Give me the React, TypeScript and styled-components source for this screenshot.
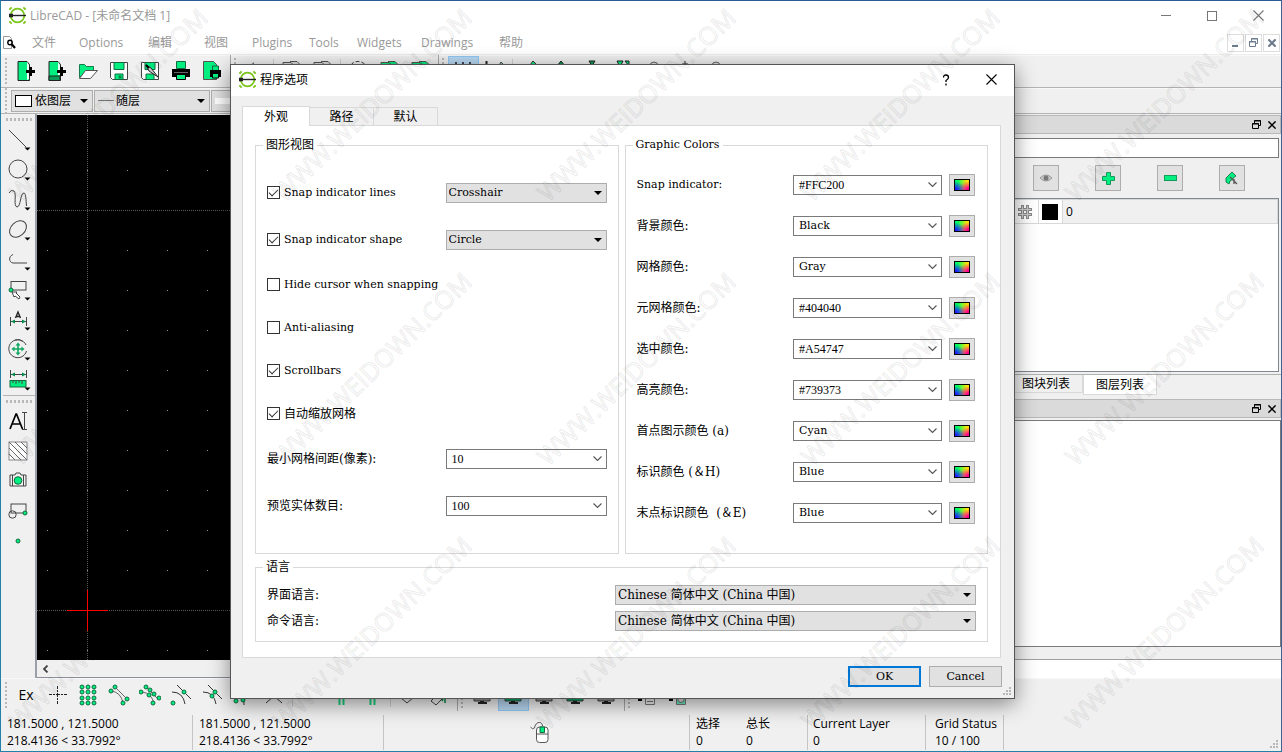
import React from 'react';
import styled, { createGlobalStyle, css } from 'styled-components';

const GREEN = '#00ef80';
const sans = '"Open Sans", "Noto Sans CJK SC", sans-serif';
const song = '"DejaVu Serif", "Noto Sans CJK SC", serif';
const songNumbers = '"Liberation Serif", "Noto Sans CJK SC", serif';

const GlobalStyle = createGlobalStyle`
  *, *::before, *::after { box-sizing: border-box; }
  body { margin: 0; background: #f0f0f0; color: #000; font: 12px/16px ${sans}; }
  button, input, select { font: inherit; color: inherit; margin: 0; }
  svg { display: block; flex: none; }
`;

const Desktop = styled.div`
  position: relative;
  min-height: 100vh;
  display: flex;
  flex-direction: column;
  overflow: hidden;
  border: 1px solid;
  border-color: #2a5b94 #3c6292 #2380a6 #2380a6;
`;

/* ---------- main window ---------- */

const TitleBar = styled.header`
  display: flex;
  align-items: center;
  height: 29px;
  padding: 0 17px 0 8px;
  background: #fff;
  color: #999;
`;

const WindowTitle = styled.span`
  flex: 1;
  margin-left: 4px;
`;

const CaptionButton = styled.button`
  display: grid;
  place-items: center;
  width: 46px;
  height: 28px;
  padding: 0;
  border: 0;
  background: none;
  &:last-child { width: 12px; margin-left: 17px; }
`;

const MenuBar = styled.nav`
  display: flex;
  align-items: center;
  height: 25px;
  padding: 1px 1px 0 1px;
  background: #fff;
  border-bottom: 1px solid #ececec;
  color: #999;
`;

const MenuItems = styled.div`
  flex: 1;
  display: grid;
  grid-template-columns: 47px 69px 56px 48px 57px 48px 64px 78px auto;
  justify-content: start;
  margin-left: 16px;
`;

const MenuItem = styled.button`
  padding: 0;
  border: 0;
  background: none;
  text-align: left;
  white-space: nowrap;
`;

const MdiButtons = styled.div`
  display: flex;
  gap: 1px;
`;

const MdiButton = styled.button`
  display: grid;
  place-items: center;
  width: 17px;
  height: 18px;
  padding: 0;
  border: 1px solid #ddd;
  background: #fff;
`;

const ToolRow = styled.div<{ $height: number; $plain?: boolean }>`
  display: flex;
  align-items: center;
  height: ${p => p.$height}px;
  padding-left: 3px;
  border-bottom: ${p => (p.$plain ? 0 : 1)}px solid #b4b4b4;
  box-shadow: inset 0 1px #f8f8f8;
`;

const Handle = styled.i<{ $across?: boolean }>`
  flex: none;
  ${p => p.$across
    ? css`
        width: 28px;
        height: 3px;
        margin: 4px 0 3px 3px;
        background: repeating-linear-gradient(90deg, #b8b8b8 0 2px, transparent 2px 4px);
      `
    : css`
        width: 2px;
        height: 26px;
        margin: 0 4px 0 1px;
        background: repeating-linear-gradient(#b8b8b8 0 2px, transparent 2px 4px);
      `}
`;

const Rule = styled.i<{ $strong?: boolean }>`
  flex: none;
  width: 1px;
  height: ${p => (p.$strong ? 32 : 24)}px;
  margin: 0 2px;
  background: ${p => (p.$strong ? '#a8a8a8' : '#cfcfcf')};
`;

const ToolButton = styled.button<{ $on?: boolean }>`
  display: grid;
  place-items: center;
  flex: none;
  width: 31px;
  height: 31px;
  padding: 0 1px 0 0;
  border: 1px solid ${p => (p.$on ? '#90c8f6' : 'transparent')};
  background: ${p => (p.$on ? '#b8d8f2' : 'none')};
`;

const ExButton = styled(ToolButton)`
  font-size: 14px;
`;

const Pens = styled.div`
  display: flex;
  gap: 1px;
`;

const Workspace = styled.main`
  flex: 1;
  display: flex;
  min-height: 564px;
`;

const SideBar = styled.aside`
  width: 36px;
  padding-left: 2px;
  border-right: 2px solid #9aa0aa;
`;

const SideGroup = styled.div`
  display: flex;
  flex-direction: column;
  padding-bottom: 1px;
  border-bottom: 1px solid #b4b4b4;
  &:last-child { border-bottom: 0; }
`;

const SideButton = styled.button`
  width: 30px;
  height: 30px;
  padding: 0;
  border: 0;
  background: none;
`;

const DrawingArea = styled.section`
  flex: 1;
  display: flex;
  flex-direction: column;
  min-width: 0;
  padding-top: 1px;
`;

const Plot = styled.svg`
  flex: 1;
  width: 100%;
  min-height: 0;
  background: #000;
`;

const ScrollBar = styled.div`
  display: flex;
  align-items: center;
  height: 18px;
  padding-left: 5px;
  border-bottom: 1px solid #8a8f99;
`;

const Docks = styled.aside`
  width: 320px;
  display: flex;
  flex-direction: column;
  padding-top: 1px;
`;

const DockTitle = styled.div`
  display: flex;
  align-items: center;
  justify-content: flex-end;
  gap: 6px;
  height: 19px;
  padding-right: 3px;
  border: 1px solid #b8b8b8;
  background: #dadada;
`;

const DockButton = styled.button`
  display: grid;
  place-items: center;
  width: 10px;
  height: 16px;
  padding: 0;
  border: 0;
  background: none;
`;

const Search = styled.input`
  height: 20px;
  margin: 4px 2px 0;
  border: 1px solid #7a7a7a;
  background: #fff;
`;

const LayerButtons = styled.div`
  display: flex;
  justify-content: flex-end;
  gap: 36px;
  padding: 7px 36px 7px 0;
`;

const LayerButton = styled.button`
  display: grid;
  place-items: center;
  width: 26px;
  height: 26px;
  padding: 0;
  border: 1px solid #adadad;
  background: #e1e1e1;
`;

const LayerList = styled.div`
  height: 174px;
  margin: 0 2px 2px 3px;
  border: 1px solid #828790;
  background: #fff;
`;

const LayerTable = styled.table`
  width: 100%;
  table-layout: fixed;
  border-collapse: collapse;
  td { height: 24px; padding: 0 3px; border: 1px solid #d8d8d8; background: #fff; }
  td:last-child { background: #f0f0f0; }
`;

const Swatch = styled.i`
  display: block;
  width: 16px;
  height: 16px;
  background: #000;
`;

const DockTabs = styled.div`
  display: flex;
  align-items: flex-start;
  height: 25px;
  padding-left: 48px;
  border-top: 1px solid #b0b0b0;
`;

const DockTab = styled.button<{ $on?: boolean }>`
  width: 74px;
  height: ${p => (p.$on ? 20 : 18)}px;
  padding: 0;
  border: 1px solid #d9d9d9;
  border-top: 0;
  background: ${p => (p.$on ? '#fff' : '#f0f0f0')};
`;

const History = styled.div`
  flex: 1;
  margin-top: 2px;
  border: 1px solid #7a7a7a;
  background: #fff;
`;

const CommandInput = styled.input`
  height: 19px;
  margin-top: 12px;
  border: 0;
  border-top: 1px solid #a0a0a0;
  background: #fff;
`;

const StatusBar = styled.footer`
  position: relative;
  display: grid;
  grid-template-columns: 192px 191px 306fr 118px 118px 78px 277fr;
  height: 39px;
  padding: 3px 0 1px;
  line-height: 17px;
  white-space: pre;
`;

const StatusCell = styled.div<{ $indent?: number }>`
  display: flex;
  gap: 26px;
  padding-left: ${p => p.$indent ?? 6}px;
  border-right: 1px solid #c4c4c4;
  &:nth-child(7) { border-right: 0; }
`;

const MouseCell = styled(StatusCell)`
  align-items: center;
  justify-content: center;
`;

const GripSpot = styled.div`
  position: absolute;
  right: 2px;
  bottom: 2px;
`;

/* ---------- form controls ---------- */

const Field = styled.div`
  position: relative;
`;

const Select = styled.select<{ $flat?: boolean; $numeric?: boolean; $big?: boolean; $indent?: number; $height?: number }>`
  display: block;
  appearance: none;
  width: 100%;
  height: ${p => p.$height ?? 20}px;
  padding: 0 16px 0 ${p => p.$indent ?? (p.$flat ? 2 : 5)}px;
  border: 1px solid ${p => (p.$flat ? '#adadad' : '#7a7a7a')};
  border-radius: 0;
  background: ${p => (p.$flat ? '#e1e1e1' : '#fff')};
  font-family: ${p => (p.$numeric ? songNumbers : song)};
  font-size: ${p => (p.$numeric || p.$big ? 12 : 11)}px;
  line-height: 16px;
`;

const PenField = styled(Field)<{ $width: number }>`
  width: ${p => p.$width}px;
`;

const Arrow = styled.svg`
  position: absolute;
  right: 5px;
  top: 50%;
  transform: translateY(-50%);
  pointer-events: none;
`;

const Sample = styled.svg`
  position: absolute;
  left: 4px;
  top: 5px;
  pointer-events: none;
`;

/* ---------- dialog ---------- */

const Dialog = styled.div`
  position: absolute;
  left: 229px;
  top: 63px;
  width: 785px;
  border: 1px solid #555;
  background: #f0f0f0;
  box-shadow: 0 5px 20px rgba(0, 0, 0, 0.45);
  font-family: ${song};
`;

const DialogBar = styled.header`
  display: flex;
  align-items: center;
  height: 31px;
  padding: 0 17px 2px 8px;
  background: #fff;
  font-family: ${sans};
`;

const DialogClose = styled.button`
  display: grid;
  place-items: center;
  width: 12px;
  height: 20px;
  padding: 0;
  margin-left: 33px;
  border: 0;
  background: none;
`;

const Tabs = styled.div`
  display: flex;
  align-items: flex-end;
  height: 29px;
  padding-left: 11px;
`;

const Tab = styled.button<{ $on?: boolean }>`
  position: relative;
  width: ${p => (p.$on ? 68 : 64)}px;
  height: ${p => (p.$on ? 20 : 18)}px;
  margin-bottom: ${p => (p.$on ? -1 : 0)}px;
  padding: 0;
  border: 1px solid #d9d9d9;
  border-left-width: ${p => (p.$on ? 1 : 0)}px;
  border-bottom: 0;
  background: ${p => (p.$on ? '#fff' : '#f0f0f0')};
`;

const Page = styled.div`
  display: grid;
  grid-template-columns: 1fr 1fr;
  gap: 5px 6px;
  margin: 0 13px 0 11px;
  padding: 11px 12px 15px;
  border: 1px solid #d9d9d9;
  background: #fff;
`;

const groupPadding = {
  view: '16px 11px 19px 11px',
  colors: '11px 12px 20px 11px',
  language: '7px 11px 7px 11px',
};

const Group = styled.fieldset<{ $kind: keyof typeof groupPadding }>`
  min-width: 0;
  margin: 0;
  padding: ${p => groupPadding[p.$kind]};
  border: 1px solid #d9d9d9;
  ${p => p.$kind === 'language' && css`grid-column: 1 / -1;`}
`;

const Legend = styled.legend<{ $latin?: boolean }>`
  margin-left: -4px;
  padding: 0 3px;
  font-size: ${p => (p.$latin ? 11 : 12)}px;
  line-height: 16px;
`;

const FormRow = styled.div<{ $height: number; $columns: string }>`
  display: grid;
  grid-template-columns: ${p => p.$columns};
  align-items: center;
  height: ${p => p.$height}px;
  white-space: pre;
`;

const Label = styled.label<{ $latin?: boolean }>`
  display: flex;
  align-items: center;
  gap: 4px;
  font-size: ${p => (p.$latin ? 11 : 12)}px;
`;

const Check = styled.input`
  appearance: none;
  position: relative;
  width: 13px;
  height: 13px;
  border: 1px solid #333;
  background: #fff;
  &:checked::after {
    content: '';
    position: absolute;
    left: 1px;
    top: 2px;
    width: 9px;
    height: 5px;
    border: solid #333;
    border-width: 0 0 1px 1px;
    transform: rotate(-45deg);
  }
`;

const ColorButton = styled.button`
  display: grid;
  place-items: center;
  justify-self: end;
  width: 26px;
  height: 22px;
  padding: 0;
  border: 1px solid #adadad;
  background: #e1e1e1;
`;

const Spectrum = styled.i`
  width: 16px;
  height: 12px;
  border: 1px solid #000;
  background:
    radial-gradient(ellipse 10px 9px at 0 100%, #2020ff 20%, rgb(0 160 255 / 0)),
    radial-gradient(ellipse 11px 9px at 100% 100%, #ff0090 20%, rgb(255 40 0 / 0)),
    linear-gradient(90deg, #00ff60 20%, #ffe800 85%);
`;

const Actions = styled.footer`
  display: flex;
  justify-content: flex-end;
  gap: 8px;
  padding: 8px 12px 11px;
`;

const PushButton = styled.button<{ $primary?: boolean }>`
  width: 73px;
  height: 21px;
  padding: 0;
  border: ${p => (p.$primary ? '2px solid #0078d7' : '1px solid #adadad')};
  background: #e1e1e1;
  font-size: 11px;
  line-height: 16px;
`;

const Watermarks = styled.svg`
  position: absolute;
  inset: 0;
  width: 100%;
  height: 100%;
  pointer-events: none;
`;

/* ---------- drawings ---------- */

const Logo = () => (
  <svg width="17" height="17" viewBox="0 0 17 17">
    <circle cx="8.5" cy="8.5" r="6.8" fill="none" stroke="#7cc51c" strokeWidth="1.8" />
    <path d="M1 1h2M1 1v2M16 1h-2M16 1v2M1 16h2M1 16v-2M16 16h-2M16 16v-2" stroke="#7cc51c" strokeWidth="1.6" />
    <path d="M0 8.5h4" stroke="#222" strokeWidth="3.6" />
    <path d="M3 8.5h14" stroke="#222" strokeWidth="1.4" />
  </svg>
);

const Cross = ({ size = 11, color = '#000', weight = 1.1 }) => (
  <svg width={size} height={size} viewBox="0 0 11 11">
    <path d="M.5.5l10 10M10.500.5l-10 10" stroke={color} strokeWidth={weight} />
  </svg>
);

const Restore = ({ color = '#000' }) => (
  <svg width="9" height="9" viewBox="0 0 9 9" fill="none" stroke={color}>
    <path d="M2.500 3V.5h6v5H6.500M2 1h7M.5 3.500h6v5h-6zM0 4h7" />
  </svg>
);

const Grip = () => (
  <svg width="9" height="9" viewBox="0 0 9 9" fill="#b8b8b8">
    <path d="M6 0h2v2H6zM3 3h2v2H3zM6 3h2v2H6zM0 6h2v2H0zM3 6h2v2H3zM6 6h2v2H6z" />
  </svg>
);

const Triangle = () => (
  <Arrow width="8" height="4" viewBox="0 0 8 4"><path d="M0 0h8L4 4z" fill="#000" /></Arrow>
);

const Chevron = () => (
  <Arrow width="9" height="6" viewBox="0 0 9 6"><path d="M.5.5l4 4 4-4" fill="none" stroke="#555" strokeWidth="1.1" /></Arrow>
);

const sheets = (fill: string) => (
  <path d="M3 2.500h8l3 3v13H3zM10 1.500h7l3 3v12H14" fill={fill} stroke="#555" />
);

const fileIcons: Record<string, React.ReactNode> = {
  'New': <>
    <path d="M3 1.500h9l2.500 3v16H3z" fill={GREEN} stroke="#222" />
    <path d="M12 2v18l2-1V5z" fill="#e8fff4" />
    <path d="M11 11.500h9M15.500 7v9" stroke="#000" strokeWidth="3" />
  </>,
  'New from template': <>
    <path d="M3 1.500h9l2.500 3v16H3z" fill={GREEN} stroke="#222" />
    <path d="M12 2v13h2V5z" fill="#e8fff4" />
    <path d="M3 16h11v4.500H3z" fill="#0a9c58" stroke="#222" />
    <path d="M11 11.500h9M15.500 7v9" stroke="#000" strokeWidth="3" />
  </>,
  'Open': <>
    <path d="M2.500 17.500v-13h5l2 2h7v4l-8 1z" fill={GREEN} stroke="#167a4c" />
    <path d="M2.500 18.500l6-8h12l-7 8z" fill="#fff" stroke="#555" />
  </>,
  'Save': <>
    <path d="M2.500 2.500h17v17h-15l-2-2z" fill="#fff" stroke="#444" />
    <path d="M6 2.500h10v7H6zM7 14h8v5.500H7z" fill={GREEN} stroke="#146b42" />
    <path d="M10.500 15.500h3v3h-3z" fill="#084" />
  </>,
  'Save as': <>
    <path d="M2.500 2.500h17v17h-15l-2-2z" fill="#fff" stroke="#444" />
    <path d="M6 2.500h10v7H6zM7 14h8v5.500H7z" fill={GREEN} stroke="#146b42" />
    <path d="M7 5l3 6 9 6-7-9z" fill="#ccc" stroke="#222" /><path d="M7 5l3 3" stroke="#000" strokeWidth="2" />
  </>,
  'Print': <>
    <path d="M6.500 1.500h9v7h-9z" fill={GREEN} stroke="#146b42" />
    <path d="M2 9h18v8H2z" fill="#000" />
    <path d="M6.500 14.500h9v5h-9z" fill={GREEN} stroke="#000" /><path d="M4 12.500h14" stroke="#666" />
  </>,
  'Print preview': <>
    <path d="M2.500 1.500h10l3 3v15h-13z" fill={GREEN} stroke="#555" />
    <path d="M11.500 6h6v5h-6z" fill={GREEN} stroke="#146b42" />
    <path d="M9 10h11v7H9z" fill="#000" /><path d="M11.500 13.500h6v4.500h-6z" fill={GREEN} stroke="#000" />
  </>,
  'Undo': <path d="M3 8l7-6v5q9 0 9 10-3-5-9-5v4z" fill="#777" />,
  'Cut': sheets('#ddd'),
  'Redraw': <circle cx="11" cy="11" r="9.500" fill="none" stroke="#333" strokeDasharray="4 2" />,
  'Zoom': sheets(GREEN),
  'Grid': <path d="M3 2h2v2H3zM10 2h2v2h-2zM17 2h2v2h-2zM3 10h2v2H3zM10 10h2v2h-2zM17 10h2v2h-2z" fill="#445" />,
  'Draft': <><path d="M3.500 1v20" stroke="#222" strokeWidth="2" /><path d="M14 9l4-7 3 3-4 6" fill="#8ca" stroke="#444" /></>,
  'Modify': <path d="M8 9l6-8 3 3-6 8z" fill={GREEN} stroke="#333" />,
  'Up': <path d="M11 1l4 5H7z" fill="#0a9a58" stroke="#222" />,
  'Down': <path d="M8 1h6l-3 5z" fill="#0a9a58" stroke="#222" />,
  'Corner': <path d="M5 1h6l-3 6zM13 1h4v5z" fill={GREEN} stroke="#222" />,
  'Find': <><circle cx="11" cy="6" r="4" fill="#ddd" stroke="#666" /><path d="M11 11v8" stroke="#555" /></>,
  'Center': <path d="M11 1v10M8 4h6" stroke="#333" />,
};

const greenDot = (x: number, y: number) => (
  <circle key={`${x},${y}`} cx={x} cy={y} r="2" fill={GREEN} stroke="#15693f" />
);

const monitor = (color: string) => (
  <>
    <path d="M2.500 3.500h17v10h-17z" fill="#ddd" stroke="#333" />
    <path d="M3 13.500h16v3.500H3z" fill={color} stroke="#444" />
    <path d="M9 17h4v2H9zM7 18h9v2H7z" fill="#222" />
  </>
);

const snapIcons: Record<string, React.ReactNode> = {
  'Free snap': <path d="M11.500 2v18M3 10.500h18" stroke="#222" strokeDasharray="3 1 2 1 4 1 2 1" />,
  'Snap on grid': <>{[5, 11, 17].flatMap(x => [3, 8, 14, 19].map(y => greenDot(x, y)))}</>,
  'Snap on endpoints': <>
    <path d="M7 3l12 12M3 7q10 1 12 12" fill="none" stroke="#666" />
    {greenDot(7, 3)}{greenDot(3, 7)}{greenDot(19, 15)}{greenDot(15, 19)}
  </>,
  'Snap on entity': <>
    <path d="M7 3l12 12M3 8q10 1 12 12" fill="none" stroke="#666" />
    {greenDot(7, 3)}{greenDot(2, 8)}{greenDot(11, 6)}{greenDot(10, 11)}{greenDot(15, 10)}{greenDot(20, 14)}{greenDot(14, 19)}
  </>,
  'Snap center': <><path d="M7 1l14 14M2 8q11 0 13 12" fill="none" stroke="#333" />{greenDot(14, 8)}{greenDot(3, 19)}</>,
  'Snap middle': <><path d="M7 1l14 14M2 8q11 0 13 12" fill="none" stroke="#333" />{greenDot(14, 8)}{greenDot(11, 12)}</>,
  'Snap distance': <><path d="M2 8q11 0 10 13M6 14l14-4" fill="none" stroke="#333" />{greenDot(4, 17)}{greenDot(11, 16)}</>,
  'Snap intersection': <path d="M3 19l8-7 8 7" fill="none" stroke="#333" />,
  'Restrict': <path d="M9.500 0v21M13.500 0v21" stroke="#19d27d" strokeWidth="2" />,
  'Set relative zero': <path d="M4 14l6 5 8-7-6-6z" fill="none" stroke="#444" />,
  'Lock relative zero': <><path d="M3 17l5 4 6-6-4-5z" fill="none" stroke="#444" /><path d="M14 17l3-7v9" fill="none" stroke="#084" strokeWidth="1.5" /></>,
  'Monitor': monitor('#999'),
  'Monitor green': monitor('#00b468'),
  'Sheet': <><path d="M0 15.500h4" stroke="#000" strokeWidth="3" /><path d="M7.500 3.500h9v17h-9zM9 17.500h6" fill="#eee" stroke="#777" /></>,
  'Image sheet': <><path d="M0 15.500h4" stroke="#000" strokeWidth="3" /><path d="M7.500 3.500h9v17h-9z" fill="#6eb" stroke="#777" /><circle cx="12" cy="15.500" r="3" fill="#ddd" stroke="#777" /></>,
};

const more = <path d="M21.500 23.500h6l-3 3z" fill="#000" stroke="none" />;

const sideIcons: [string, React.ReactNode][] = [
  ['Line', <><path d="M6 6l17 17" />{more}</>],
  ['Circle', <><circle cx="15" cy="15" r="9" />{more}</>],
  ['Curve', <><path d="M6 9q2-4 5-2c3 3-1 15 3 16 4 0 3-14 7-14 2 0 2 8 2.500 13" />{more}</>],
  ['Ellipse', <><ellipse cx="15" cy="15" rx="9.500" ry="7" transform="rotate(-42 15 15)" />{more}</>],
  ['Polyline', <><path d="M10 10.500c-5 2-4 8 0 8.500h14" />{more}</>],
  ['Select', <><rect x="8" y="7.500" width="15" height="8.500" />{greenDot(8, 16)}<path d="M9 18l2 5 1-1 4 3 1-2-4-4 1-1z" fill="#fff" />{more}</>],
  ['Dimension', <><path d="M7.500 13v9M23.500 13v9M8 17.500h15" /><path d="M8 17.500l4-2v4zM23 17.500l-4-2v4z" fill="#008a4a" stroke="none" /><path d="M12.500 14l2.500-6 2.500 6M13 12.500h4" stroke="#222" strokeWidth="1.400" />{more}</>],
  ['Modify', <><path d="M23 11a9 9 0 1 0 .5 6M12 6a9 9 0 0 1 8 1.500" /><path d="M15 10v10M10 15h10" stroke="#10a862" strokeWidth="1.600" /><path d="M15 8.500l2.500 3h-5zM15 21.500l2.500-3h-5zM8.500 15l3-2.500v5zM21.500 15l-3-2.500v5z" fill="#10a862" stroke="none" />{more}</>],
  ['Measure', <><path d="M7.500 6v8M23.500 6v8M8 10.500h15" /><path d="M8 10.500l4-2v4zM23 10.500l-4-2v4z" fill="#008a4a" stroke="none" /><rect x="7" y="16.500" width="16" height="6.500" fill={GREEN} stroke="#15693f" /><path d="M10 17v2M13 17v3M16 17v2M19 17v3" />{more}</>],
];

const insertIcons: [string, React.ReactNode][] = [
  ['Text', <><path d="M7 23l6-15h.500l6 15M9 18h8" stroke="#000" strokeWidth="1.700" /><path d="M19 6.500h5M21.500 6.500v17M19 23.500h5" /></>],
  ['Hatch', <><rect x="6" y="6" width="18" height="18" fill="#fff" stroke="#888" /><path d="M6 18l6 6M6 12l12 12M6 6l18 18M12 6l12 12M18 6l6 6" stroke="#666" /></>],
  ['Image', <><path d="M7 9h5l1-2h4l1 2h5v11H7zM9.500 9v11M20.500 9v11" /><circle cx="15" cy="14.500" r="3.800" fill={GREEN} stroke="#15693f" /></>],
  ['Block', <><rect x="8" y="8" width="15" height="9" /><circle cx="9.500" cy="18.500" r="3.700" />{greenDot(22, 17)}</>],
  ['Point', greenDot(15, 15)],
];

const SideTools = ({ items }: { items: [string, React.ReactNode][] }) => (
  <SideGroup>
    <Handle $across />
    {items.map(([name, icon]) => (
      <SideButton key={name} aria-label={name}>
        <svg width="30" height="30" viewBox="0 0 30 30" fill="none" stroke="#444">{icon}</svg>
      </SideButton>
    ))}
  </SideGroup>
);

const Tools = ({ names, icons, on }: { names: string[]; icons: Record<string, React.ReactNode>; on?: number }) => (
  <>
    {names.map((name, i) => (
      <ToolButton key={i} $on={on === i} aria-label={name}>
        <svg width="22" height="22" viewBox="0 0 22 22">{icons[name]}</svg>
      </ToolButton>
    ))}
  </>
);

/* ---------- dialog content ---------- */

const wideRow = '1fr 161px';

const Choice = ({ id, value, flat, big, numeric }: { id: string; value: string; flat?: boolean; big?: boolean; numeric?: boolean }) => (
  <Field>
    <Select id={id} $flat={flat} $big={big} $numeric={numeric} defaultValue={value}><option>{value}</option></Select>
    {flat ? <Triangle /> : <Chevron />}
  </Field>
);

const isLatin = (text: string) => /^[ -~]+$/.test(text);

const checks: [string, boolean][] = [
  ['Hide cursor when snapping', false],
  ['Anti-aliasing', false],
  ['Scrollbars', true],
  ['自动缩放网格', true],
];

const colors: [string, string][] = [
  ['Snap indicator:', '#FFC200'],
  ['背景颜色:', 'Black'],
  ['网格颜色:', 'Gray'],
  ['元网格颜色:', '#404040'],
  ['选中颜色:', '#A54747'],
  ['高亮颜色:', '#739373'],
  ['首点图示颜色 (a)', 'Cyan'],
  ['标识颜色 (＆H)', 'Blue'],
  ['末点标识颜色  (＆E)', 'Blue'],
];

const Options = () => (
  <Dialog role="dialog" aria-label="程序选项">
    <DialogBar>
      <Logo />
      <WindowTitle>程序选项</WindowTitle>
      <DialogClose aria-label="Help">
        <svg width="8" height="12" viewBox="0 0 8 12" fill="none" stroke="#000" strokeWidth="1.300"><path d="M1.500 3.500Q1.500 1 4 1t2.500 2.500Q6.500 5 4 6.500V8M4 9.500v2" /></svg>
      </DialogClose>
      <DialogClose aria-label="Close"><Cross /></DialogClose>
    </DialogBar>
    <Tabs role="tablist">
      <Tab $on role="tab">外观</Tab>
      <Tab role="tab">路径</Tab>
      <Tab role="tab">默认</Tab>
    </Tabs>
    <Page>
      <Group $kind="view">
        <Legend>图形视图</Legend>
        {[['lines', 'Crosshair'], ['shape', 'Circle']].map(([kind, value]) => (
          <FormRow key={kind} $height={47} $columns={wideRow}>
            <Label $latin><Check type="checkbox" defaultChecked />{`Snap indicator ${kind}`}</Label>
            <Choice id={`snap-${kind}`} value={value} flat />
          </FormRow>
        ))}
        {checks.map(([text, on]) => (
          <FormRow key={text} $height={43} $columns="1fr">
            <Label $latin={isLatin(text)}><Check type="checkbox" defaultChecked={on} />{text}</Label>
          </FormRow>
        ))}
        <FormRow $height={47} $columns={wideRow}>
          <Label htmlFor="spacing">最小网格间距(像素):</Label>
          <Choice id="spacing" value="10" numeric />
        </FormRow>
        <FormRow $height={47} $columns={wideRow}>
          <Label htmlFor="preview">预览实体数目:</Label>
          <Choice id="preview" value="100" numeric />
        </FormRow>
      </Group>
      <Group $kind="colors">
        <Legend $latin>Graphic Colors</Legend>
        {colors.map(([text, value], i) => (
          <FormRow key={text} $height={41} $columns="1fr 149px 33px">
            <Label $latin={isLatin(text)} htmlFor={`color-${i}`}>{text}</Label>
            <Choice id={`color-${i}`} value={value} numeric={value.startsWith('#')} />
            <ColorButton aria-label={text}><Spectrum /></ColorButton>
          </FormRow>
        ))}
      </Group>
      <Group $kind="language">
        <Legend>语言</Legend>
        {[['gui', '界面语言:'], ['command', '命令语言:']].map(([id, text]) => (
          <FormRow key={id} $height={26} $columns="1fr 361px">
            <Label htmlFor={id}>{text}</Label>
            <Choice id={id} value="Chinese 简体中文 (China 中国)" flat big />
          </FormRow>
        ))}
      </Group>
    </Page>
    <Actions>
      <PushButton $primary>OK</PushButton>
      <PushButton>Cancel</PushButton>
    </Actions>
    <GripSpot><Grip /></GripSpot>
  </Dialog>
);

const DockHead = () => (
  <DockTitle>
    <DockButton aria-label="Float"><Restore /></DockButton>
    <DockButton aria-label="Close"><Cross size={8} weight={2} /></DockButton>
  </DockTitle>
);

export default function App() {
  return (
    <Desktop>
      <GlobalStyle />
      <TitleBar>
        <Logo />
        <WindowTitle>LibreCAD - [未命名文档 1]</WindowTitle>
        <CaptionButton aria-label="Minimize"><svg width="10" height="1"><path d="M0 .5h10" stroke="#777" /></svg></CaptionButton>
        <CaptionButton aria-label="Maximize"><svg width="10" height="10"><rect x=".5" y=".5" width="9" height="9" fill="none" stroke="#777" /></svg></CaptionButton>
        <CaptionButton aria-label="Close"><Cross color="#777" /></CaptionButton>
      </TitleBar>
      <MenuBar>
        <svg width="14" height="14" viewBox="0 0 14 14">
          <path d="M1.500.5h6l2 2v10h-8z" fill="#fff" stroke="#999" />
          <circle cx="8" cy="6.500" r="2.200" fill="none" stroke="#000" strokeWidth="1.400" />
          <path d="M9.500 8l3.500 4" stroke="#000" strokeWidth="2.200" />
        </svg>
        <MenuItems>
          {['文件', 'Options', '编辑', '视图', 'Plugins', 'Tools', 'Widgets', 'Drawings', '帮助'].map(m => <MenuItem key={m}>{m}</MenuItem>)}
        </MenuItems>
        <MdiButtons>
          <MdiButton aria-label="Minimize document"><svg width="7" height="8"><path d="M0 7h6" stroke="#6d7c8c" strokeWidth="2" /></svg></MdiButton>
          <MdiButton aria-label="Restore document"><Restore color="#6d7c8c" /></MdiButton>
          <MdiButton aria-label="Close document"><Cross size={8} color="#6d7c8c" weight={3} /></MdiButton>
        </MdiButtons>
      </MenuBar>
      <ToolRow $height={33}>
        <Handle />
        <Tools icons={fileIcons} names={['New', 'New from template', 'Open', 'Save', 'Save as', 'Print', 'Print preview']} />
        <Rule $strong /><Handle />
        <Tools icons={fileIcons} names={['Undo']} />
        <Rule />
        <Tools icons={fileIcons} names={['Cut', 'Cut']} />
        <Rule />
        <Tools icons={fileIcons} names={['Redraw', 'Zoom', 'Zoom']} />
        <Rule $strong /><Handle />
        <Tools icons={fileIcons} names={['Grid', 'Draft']} on={0} />
        <Rule />
        <Tools icons={fileIcons} names={['Modify', 'Up', 'Down', 'Corner', 'Find', 'Center', 'Find']} />
      </ToolRow>
      <ToolRow $height={26}>
        <Handle />
        <Pens>
          <PenField $width={82}>
            <Select $flat $big $indent={23} $height={22} aria-label="Pen color"><option>依图层</option></Select>
            <Sample width="17" height="12"><rect x=".5" y=".5" width="16" height="11" fill="#fff" stroke="#000" /></Sample>
            <Triangle />
          </PenField>
          <PenField $width={116}>
            <Select $flat $big $indent={21} $height={22} aria-label="Pen width"><option>随层</option></Select>
            <Sample width="16" height="12"><path d="M0 5.500h16" stroke="#777" /></Sample>
            <Triangle />
          </PenField>
          <PenField $width={116}>
            <Select $flat $big $indent={23} $height={22} aria-label="Line type"><option>随层</option></Select>
            <Sample width="16" height="12"><path d="M0 6h16" stroke="#fff" strokeWidth="6" /></Sample>
            <Triangle />
          </PenField>
        </Pens>
      </ToolRow>
      <Workspace>
        <SideBar>
          <SideTools items={sideIcons} />
          <SideTools items={insertIcons} />
        </SideBar>
        <DrawingArea>
          <Plot>
            <defs>
              <pattern id="dots" x="10" y="15" width="40" height="40" patternUnits="userSpaceOnUse">
                <rect width="1" height="1" fill="#909090" />
              </pattern>
            </defs>
            <rect width="100%" height="100%" fill="url(#dots)" />
            <path d="M50.500 0v2000M0 95.500h2000M0 495.500h2000" stroke="#585858" strokeDasharray="1 1" />
            <path d="M30 495.500h41M50.500 475v41" stroke="#f00" />
          </Plot>
          <ScrollBar><svg width="7" height="8" viewBox="0 0 7 8"><path d="M5.500.5L2 4l3.500 3.500" fill="none" stroke="#444" strokeWidth="1.800" /></svg></ScrollBar>
        </DrawingArea>
        <Docks>
          <DockHead />
          <Search aria-label="Filter layers" />
          <LayerButtons>
            {['Show all', 'Hide all'].map(name => (
              <LayerButton key={name} aria-label={name}>
                <svg width="14" height="10" viewBox="0 0 14 10"><path d="M1 5q6-6 12 0-6 6-12 0z" fill="#ccc" stroke="#999" /><circle cx="7" cy="5" r="2.500" fill="#777" /></svg>
              </LayerButton>
            ))}
            <LayerButton aria-label="Add layer"><svg width="13" height="13"><path d="M4.500.5h4v4h4v4h-4v4h-4v-4h-4v-4h4z" fill={GREEN} stroke="#149a5a" /></svg></LayerButton>
            <LayerButton aria-label="Remove layer"><svg width="13" height="6"><rect x=".5" y=".5" width="12" height="5" fill={GREEN} stroke="#149a5a" /></svg></LayerButton>
            <LayerButton aria-label="Edit layer"><svg width="14" height="14"><path d="M1 11V7l6-6 4 4-3 2v1l-3 2-1 3z" fill={GREEN} stroke="#168050" /><path d="M5 6l7 7M9 8v5" stroke="#555" strokeWidth="1.300" /></svg></LayerButton>
          </LayerButtons>
          <LayerList>
            <LayerTable>
              <colgroup><col width="25" /><col width="24" /><col width="24" /><col width="24" /><col /></colgroup>
              <tbody>
                <tr>
                  <td /><td /><td>
                    <svg width="14" height="14" fill="none" stroke="#888" strokeWidth="3"><path d="M4.500 0v14M9.500 0v14M0 4.500h14M0 9.500h14" /><path d="M4.500 1v12M9.500 1v12M1 4.500h12M1 9.500h12" stroke="#ccc" strokeWidth="1" /></svg>
                  </td><td><Swatch /></td><td>0</td>
                </tr>
              </tbody>
            </LayerTable>
          </LayerList>
          <DockTabs><DockTab>图块列表</DockTab><DockTab $on>图层列表</DockTab></DockTabs>
          <DockHead />
          <History />
          <CommandInput aria-label="Command" />
        </Docks>
      </Workspace>
      <ToolRow $height={34} $plain>
        <Handle />
        <ExButton>Ex</ExButton>
        <Tools icons={snapIcons} names={['Free snap', 'Snap on grid', 'Snap on endpoints', 'Snap on entity', 'Snap center', 'Snap middle', 'Snap distance', 'Snap intersection']} />
        <Rule />
        <Tools icons={snapIcons} names={['Restrict nothing', 'Restrict', 'Restrict']} />
        <Rule />
        <Tools icons={snapIcons} names={['Set relative zero', 'Lock relative zero']} />
        <Rule $strong /><Handle />
        <Tools icons={snapIcons} names={['Monitor', 'Monitor green', 'Monitor', 'Monitor green', 'Monitor']} on={1} />
        <Rule $strong /><Handle />
        <Tools icons={snapIcons} names={['Sheet', 'Image sheet']} />
      </ToolRow>
      <StatusBar>
        <StatusCell>{'181.5000 , 121.5000\n218.4136 < 33.7992°'}</StatusCell>
        <StatusCell>{'181.5000 , 121.5000\n218.4136 < 33.7992°'}</StatusCell>
        <MouseCell>
          <svg width="20" height="22" viewBox="0 0 20 22" fill="none" stroke="#555">
            <path d="M.5 5q2 3 4 1c1-7 8-7 8-2" />
            <rect x="6.500" y="5" width="11.500" height="15.500" rx="3" fill="#fff" /><path d="M6.500 12h11.500" />
            <path d="M10 5h4.500v5.500H10z" fill={GREEN} stroke="#15693f" />
          </svg>
        </MouseCell>
        <StatusCell><span>{'选择\n0'}</span><span>{'总长\n0'}</span></StatusCell>
        <StatusCell $indent={5}>{'Current Layer\n0'}</StatusCell>
        <StatusCell $indent={9}>{'Grid Status\n10 / 100'}</StatusCell>
        <StatusCell />
        <GripSpot><Grip /></GripSpot>
      </StatusBar>
      <Options />
      <Watermarks aria-hidden="true" fill="none" stroke="#000" strokeOpacity="0.07" strokeWidth="1.4" fontFamily="Open Sans, sans-serif" fontSize="25">
        {[202, 466, 730].flatMap(y => [19, 283, 547, 811, 1075].map(x => (
          <text key={`${x},${y}`} transform={`translate(${x} ${y}) rotate(-44)`}>WWW.WEIDOWN.COM</text>
        )))}
      </Watermarks>
    </Desktop>
  );
}
